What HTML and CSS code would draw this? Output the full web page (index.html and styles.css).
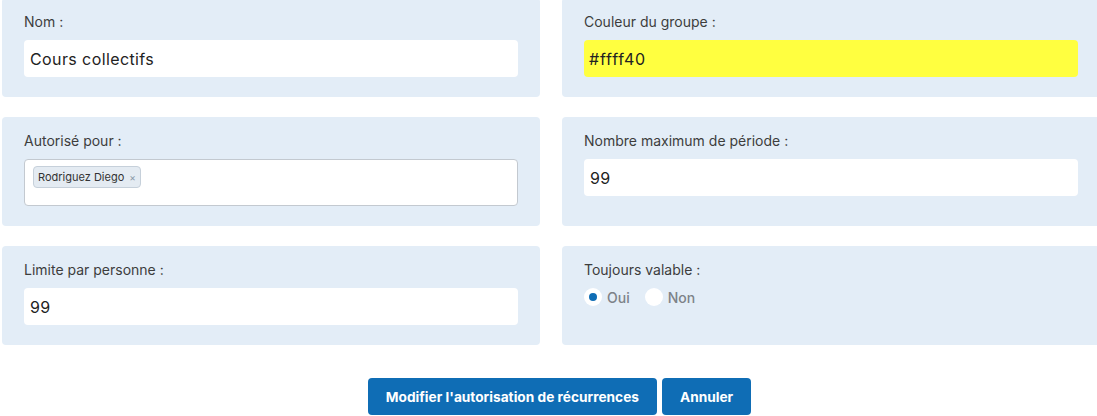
FILE: index.html
```html
<!DOCTYPE html>
<html lang="fr">
<head>
  <meta charset="UTF-8" />
  <meta name="viewport" content="width=device-width, initial-scale=1.0"/>
  <title>Autorisation de récurrences</title>
  <link rel="stylesheet" href="styles.css">
</head>
<body>

  <form class="recurrence-form">
    <div class="form-grid">

      <div class="card">
        <label class="field-label">Nom :</label>
        <div class="text-input">Cours collectifs</div>
      </div>

      <div class="card">
        <label class="field-label">Couleur du groupe :</label>
        <div class="text-input color-input">#ffff40</div>
      </div>

      <div class="card">
        <label class="field-label">Autorisé pour :</label>
        <div class="multi-select">
          <span class="tag">Rodriguez Diego <span class="tag-remove">×</span></span>
        </div>
      </div>

      <div class="card">
        <label class="field-label">Nombre maximum de période :</label>
        <div class="text-input">99</div>
      </div>

      <div class="card">
        <label class="field-label">Limite par personne :</label>
        <div class="text-input">99</div>
      </div>

      <div class="card">
        <label class="field-label">Toujours valable :</label>
        <div class="radio-row">
          <span class="radio checked"></span><span class="radio-text">Oui</span>
          <span class="radio"></span><span class="radio-text">Non</span>
        </div>
      </div>

    </div>

    <div class="actions">
      <button type="button" class="btn">Modifier l'autorisation de récurrences</button>
      <button type="button" class="btn">Annuler</button>
    </div>
  </form>

</body>
</html>
```

FILE: styles.css
```css
* {
  box-sizing: border-box;
  margin: 0; padding: 0;
}
body {
  font-family: Inter, 'Noto Sans', sans-serif;
  background: #fff;
  color: #333;
  overflow: hidden;
}

.recurrence-form {
  width: 1100px;
  margin-top: -2px;
}

.form-grid {
  display: grid;
  grid-template-columns: 538px 538px;
  column-gap: 22px;
  row-gap: 20px;
  margin-left: 2px;
}

.card {
  background: #e3edf7;
  border-radius: 4px;
  padding: 14px 22px 20px;
}

.field-label {
  display: block;
  font-size: 14px;
  line-height: 20px;
  color: #3d3d3d;
  margin-bottom: 8px;
}

.text-input {
  height: 37px;
  background: #fff;
  border-radius: 4px;
  padding: 0 6px;
  display: flex;
  align-items: center;
  font-size: 16px;
  letter-spacing: 0.4px;
  color: #222;
}
.color-input {
  background: #ffff40;
  padding-left: 5px;
  letter-spacing: 0.8px;
}

.multi-select {
  height: 47px;
  background: #fff;
  border: 1px solid #c3c9d0;
  border-radius: 4px;
  padding: 5px 8px;
}
.tag {
  display: inline-flex;
  align-items: center;
  gap: 5px;
  height: 22px;
  padding: 0 4px;
  font-size: 11px;
  color: #333;
  background: #e4ebf2;
  border: 1px solid #c6d0da;
  border-radius: 4px;
}
.tag-remove {
  font-size: 10px;
  color: #8a98a8;
}

.radio-row {
  display: flex;
  align-items: center;
  height: 18px;
}
.radio {
  width: 18px; height: 18px;
  border-radius: 50%;
  background: #fff;
  display: flex;
  align-items: center;
  justify-content: center;
}
.radio.checked::after {
  content: "";
  width: 8px; height: 8px;
  border-radius: 50%;
  background: #0f6db5;
}
.radio-text {
  font-size: 14px;
  font-weight: 500;
  color: #7d8288;
  margin: 0 15px 0 5px;
}

.actions {
  display: flex;
  justify-content: center;
  gap: 5px;
  margin-top: 33px;
  padding-left: 19px;
}
.btn {
  height: 37px;
  padding: 0 18px;
  background: #0f6db5;
  color: #fff;
  border: none;
  border-radius: 4px;
  font-family: inherit;
  font-size: 13.7px;
  font-weight: 700;
  cursor: pointer;
}
```
